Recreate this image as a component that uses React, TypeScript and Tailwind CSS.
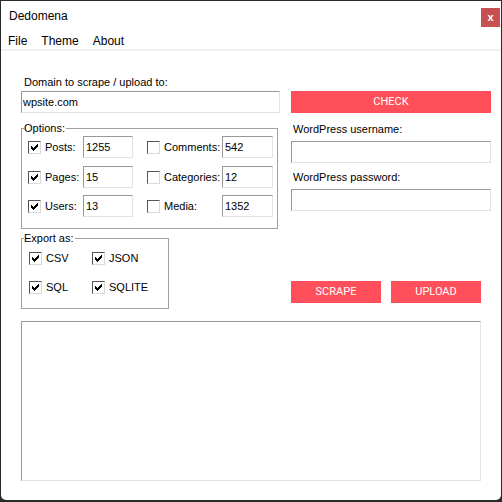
import React from "react";

const CheckMark = () => (
  <svg width="11" height="11" viewBox="0 0 11 11" shapeRendering="crispEdges" className="block">
    <rect x="2" y="4" width="1" height="3" fill="#000" />
    <rect x="3" y="5" width="1" height="3" fill="#000" />
    <rect x="4" y="6" width="1" height="3" fill="#000" />
    <rect x="5" y="5" width="1" height="3" fill="#000" />
    <rect x="6" y="4" width="1" height="3" fill="#000" />
    <rect x="7" y="3" width="1" height="3" fill="#000" />
    <rect x="8" y="2" width="1" height="3" fill="#000" />
  </svg>
);

const Box = ({ checked }: { checked: boolean }) => (
  <span className="box-border w-[13px] h-[13px] shrink-0 bg-white border border-t-[#555555] border-l-[#555555] border-r-[#d9d9d9] border-b-[#d9d9d9] flex items-center justify-center">
    {checked && <CheckMark />}
  </span>
);

const Field = ({ w, value, className = "" }: { w: string; value?: string; className?: string }) => (
  <div
    className={`box-border h-[22px] ${w} shrink-0 bg-white border border-t-[#999999] border-l-[#999999] border-r-[#e3e3e3] border-b-[#e3e3e3] flex items-center pl-[2px] text-[11px] leading-[13px] text-black ${className}`}
  >
    {value}
  </div>
);

const RedButton = ({ label, w }: { label: string; w: string }) => (
  <div className={`h-[22px] ${w} bg-[#ff4f5a] flex items-center justify-center text-white text-[11px] font-['Roboto',sans-serif]`}>
    {label}
  </div>
);

const OptRow = ({
  l,
  lv,
  r,
  rv,
  lc,
  className = "",
}: {
  l: string;
  lv: string;
  r: string;
  rv: string;
  lc: boolean;
  className?: string;
}) => (
  <div className={`flex items-center h-[22px] ${className}`}>
    <Box checked={lc} />
    <span className="ml-[4px] w-[38px] text-[11px] leading-[13px]">{l}</span>
    <Field w="w-[50px]" value={lv} />
    <span className="ml-[14px]">
      <Box checked={false} />
    </span>
    <span className="ml-[4px] w-[58px] text-[11px] leading-[13px]">{r}</span>
    <Field w="w-[51px]" value={rv} />
  </div>
);

const ExpRow = ({ a, b, className = "" }: { a: string; b: string; className?: string }) => (
  <div className={`flex items-center h-[22px] ${className}`}>
    <Box checked={true} />
    <span className="ml-[4px] w-[46px] text-[11px] leading-[13px]">{a}</span>
    <Box checked={true} />
    <span className="ml-[4px] text-[11px] leading-[13px]">{b}</span>
  </div>
);

export default function App() {
  return (
    <div className="w-[502px] h-[502px] bg-[#2a2a2a] pt-px pl-px font-['Liberation_Sans',Arial,sans-serif] text-black">
      <div className="w-[500px] h-[499px] bg-white rounded-b-[5px] flex flex-col overflow-hidden">
        {/* title bar */}
        <div className="h-[31px] flex items-start shrink-0">
          <span className="ml-[8px] mt-[8px] text-[12px] leading-[14px]">Dedomena</span>
          <div className="ml-auto mr-[1px] mt-[7px] w-[19px] h-[19px] bg-[#c75050] flex items-center justify-center text-white text-[11px] font-bold leading-none">
            x
          </div>
        </div>
        {/* menu */}
        <div className="h-[17px] flex items-center shrink-0 text-[12px] leading-[14px]">
          <span className="ml-[7px]">File</span>
          <span className="ml-[14px]">Theme</span>
          <span className="ml-[14px]">About</span>
        </div>
        <div className="h-[2px] bg-[#f0f0f0] shrink-0" />

        {/* content */}
        <div className="pl-[20px] flex flex-col">
          <div className="flex">
            {/* left column */}
            <div className="w-[259px] flex flex-col pt-[25px]">
              <div className="h-[13px] text-[11px] leading-[13px] pl-[3px]">Domain to scrape / upload to:</div>
              <Field w="w-[259px]" value="wpsite.com" className="mt-[2px] !pl-[1px]" />

              {/* Options group */}
              <div className="relative mt-[15px] w-[257px] h-[101px] box-border border border-[#a0a0a0] pl-[6px] pt-[7px]">
                <span className="absolute left-[2px] -top-[7px] bg-white pr-[1px] text-[11px] leading-[13px]">Options:</span>
                <OptRow l="Posts:" lv="1255" r="Comments:" rv="542" lc={true} />
                <OptRow l="Pages:" lv="15" r="Categories:" rv="12" lc={true} className="mt-[8px]" />
                <OptRow l="Users:" lv="13" r="Media:" rv="1352" lc={true} className="mt-[7px]" />
              </div>

              {/* Export group */}
              <div className="relative mt-[9px] w-[148px] h-[71px] box-border border border-[#a0a0a0] pl-[7px] pt-[8px]">
                <span className="absolute left-[2px] -top-[7px] bg-white pr-[1px] text-[11px] leading-[13px]">Export as:</span>
                <ExpRow a="CSV" b="JSON" />
                <ExpRow a="SQL" b="SQLITE" className="mt-[7px]" />
              </div>
            </div>

            {/* right column */}
            <div className="ml-[11px] w-[200px] flex flex-col pt-[40px]">
              <RedButton label="CHECK" w="w-[200px]" />
              <div className="mt-[10px] h-[13px] text-[11px] leading-[13px] pl-[2px]">WordPress username:</div>
              <Field w="w-[200px]" className="mt-[5px]" />
              <div className="mt-[8px] h-[13px] text-[11px] leading-[13px] pl-[2px]">WordPress password:</div>
              <Field w="w-[200px]" className="mt-[5px]" />
              <div className="mt-[70px] flex gap-[10px]">
                <RedButton label="SCRAPE" w="w-[90px]" />
                <RedButton label="UPLOAD" w="w-[90px]" />
              </div>
            </div>
          </div>

          {/* log area */}
          <div className="mt-[12px] box-border w-[460px] h-[160px] bg-white border border-t-[#999999] border-l-[#999999] border-r-[#e3e3e3] border-b-[#e3e3e3]" />
        </div>
      </div>
    </div>
  );
}
